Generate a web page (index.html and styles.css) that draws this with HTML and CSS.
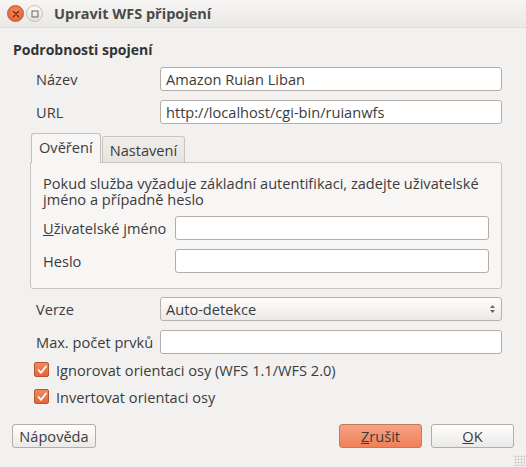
FILE: index.html
```html
<!DOCTYPE html>
<html lang="cs">
<head>
<meta charset="utf-8">
<title>Upravit WFS připojení</title>
<link rel="stylesheet" href="styles.css">
</head>
<body>
<div class="window">
  <header class="titlebar">
    <span class="wbtn close"><svg width="8" height="8" viewBox="0 0 8 8"><path d="M1.5 1.5 L6.5 6.5 M6.5 1.5 L1.5 6.5" stroke="#5a2a1a" stroke-width="1.3" stroke-linecap="round"/></svg></span>
    <span class="wbtn max"><svg width="8" height="8" viewBox="0 0 8 8"><rect x="1" y="1" width="6" height="6" fill="none" stroke="#6a6866" stroke-width="1"/></svg></span>
    <span class="title">Upravit WFS připojení</span>
  </header>
  <main class="content">
    <h2 class="group-title">Podrobnosti spojení</h2>
    <div class="rows">
      <div class="row"><label class="lbl">Název</label><div class="input">Amazon Ruian Liban</div></div>
      <div class="row"><label class="lbl">URL</label><div class="input">http://localhost/cgi-bin/ruianwfs</div></div>
    </div>
    <div class="tabs">
      <div class="tabbar">
        <span class="tab active">Ověření</span>
        <span class="tab">Nastavení</span>
      </div>
      <div class="pane">
        <p class="info"><span class="line">Pokud služba vyžaduje základní autentifikaci, zadejte uživatelské</span><span class="line">jméno a případně heslo</span></p>
        <div class="row inner"><label class="lbl"><u>U</u>živatelské jméno</label><div class="input"></div></div>
        <div class="row inner"><label class="lbl">Heslo</label><div class="input"></div></div>
      </div>
    </div>
    <div class="rows lower">
      <div class="row"><label class="lbl">Verze</label><div class="input combo">Auto-detekce<svg class="spin" width="7" height="12" viewBox="0 0 7 12"><path d="M3.5 2 L6 5 L1 5 Z M3.5 10 L6 7 L1 7 Z" fill="#6b6863"/></svg></div></div>
      <div class="row"><label class="lbl">Max. počet prvků</label><div class="input"></div></div>
    </div>
    <div class="checks">
      <div class="check"><span class="box"><svg width="12" height="12" viewBox="0 0 12 12"><path d="M2.5 6 L5 8.8 L10 2.5" fill="none" stroke="#fff" stroke-width="1.8" stroke-linejoin="round" stroke-linecap="round"/></svg></span>Ignorovat orientaci osy (WFS 1.1/WFS 2.0)</div>
      <div class="check"><span class="box"><svg width="12" height="12" viewBox="0 0 12 12"><path d="M2.5 6 L5 8.8 L10 2.5" fill="none" stroke="#fff" stroke-width="1.8" stroke-linejoin="round" stroke-linecap="round"/></svg></span>Invertovat orientaci osy</div>
    </div>
  </main>
  <footer class="buttons">
    <span class="btn help">Nápověda</span>
    <span class="spacer"></span>
    <span class="btn primary"><u>Z</u>rušit</span>
    <span class="btn"><u>O</u>K</span>
    <span class="grip"></span>
  </footer>
</div>
</body>
</html>
```
FILE: styles.css
```css
* { box-sizing: border-box; }
html, body { margin: 0; padding: 0; }
body {
  width: 526px;
  height: 467px;
  background: #f2f1f0;
  font-family: "Open Sans", "DejaVu Sans", sans-serif;
  font-size: 14.6px;
  color: #3c3c3c;
  overflow: hidden;
}
.window { position: relative; width: 526px; height: 467px; display: flex; flex-direction: column; }
.titlebar {
  height: 28px;
  display: flex;
  align-items: center;
  padding-left: 7px;
  background: linear-gradient(#f7f6f5, #eae8e5);
  border-bottom: 1px solid #e0deda;
}
.wbtn {
  width: 17px; height: 17px; border-radius: 50%;
  display: flex; align-items: center; justify-content: center;
  margin-right: 2px;
}
.wbtn.close { background: radial-gradient(circle at 50% 35%, #f58a5d, #e05a2a); border: 1px solid #c9552b; }
.wbtn.max { background: linear-gradient(#fbfbfa, #e4e2df); border: 1px solid #c4c0bb; }
.title { margin-left: 9px; font-weight: bold; font-size: 14.5px; color: #4a4a48; }
.content { padding: 13px 24px 0 13px; display: flex; flex-direction: column; }
.group-title { margin: 0; font-size: 14px; font-weight: bold; line-height: 17px; color: #333; }
.rows { display: flex; flex-direction: column; gap: 9px; margin-top: 9px; padding-left: 23px; }
.row { display: flex; align-items: center; }
.lbl { width: 124px; flex: none; white-space: nowrap; }
.input {
  flex: 1;
  height: 24px;
  background: #fff;
  border: 1px solid #b5ada5;
  border-radius: 3px;
  padding: 0 5px;
  display: flex; align-items: center;
  white-space: nowrap;
}
.tabs { margin-top: 8px; padding-left: 17px; }
.tabbar { display: flex; align-items: flex-end; height: 30px; padding-left: 1px; }
.tab {
  height: 26px;
  padding: 0 7px;
  border: 1px solid #c9c4be;
  border-bottom: none;
  border-radius: 3px 3px 0 0;
  background: linear-gradient(#f0eeec, #e6e3e0);
  display: flex; align-items: center;
}
.tab.active {
  height: 30px;
  background: #f7f6f5;
  border-color: #c4bfb9;
  position: relative;
  top: 1px;
  padding: 0 7px 4px;
  margin-right: 1px;
}
.pane {
  background: #f7f6f5;
  border: 1px solid #c9c4be;
  border-radius: 0 3px 3px 3px;
  padding: 12px 12px 14px 12px;
  height: 127px;
}
.info { margin: 0 0 9px; white-space: nowrap; display: flex; flex-direction: column; }
.info .line { display: block; height: 16px; line-height: 16px; }
.row.inner + .row.inner { margin-top: 9px; }
.row.inner .lbl { width: 132px; }
.lower { margin-top: 8px; }
.combo {
  background: linear-gradient(#fdfdfc, #eceae8);
  border-color: #b8b1aa;
  position: relative;
}
.spin { position: absolute; right: 5px; top: 5px; }
.checks { display: flex; flex-direction: column; gap: 12px; margin-top: 8px; padding-left: 21px; }
.check { display: flex; align-items: center; height: 15px; }
.box {
  width: 15px; height: 15px;
  border: 1px solid #b9552c;
  border-radius: 2px;
  background: linear-gradient(#f08a5e, #e2673a);
  display: flex; align-items: center; justify-content: center;
  margin-right: 7px;
}
.buttons { display: flex; align-items: center; gap: 9px; padding: 0 12px 0 12px; margin-top: auto; height: 37px; margin-bottom: 13px; }
.spacer { flex: 1; }
.btn {
  height: 24px;
  min-width: 83px;
  padding: 0 8px;
  border: 1px solid #b5aca4;
  border-radius: 3px;
  background: linear-gradient(#fefefe, #ebe9e7);
  display: flex; align-items: center; justify-content: center;
  color: #3c3c3c;
}
.btn.help { min-width: 84px; padding: 0 6px; }
.btn.primary {
  background: linear-gradient(#f6a383, #ef8058);
  border-color: #c47a5f;
}
.grip {
  position: absolute; right: 1px; bottom: 1px;
  width: 11px; height: 11px;
  background-image: radial-gradient(circle, #c9c5c0 0.9px, transparent 1.1px);
  background-size: 3px 3px;
}
```
